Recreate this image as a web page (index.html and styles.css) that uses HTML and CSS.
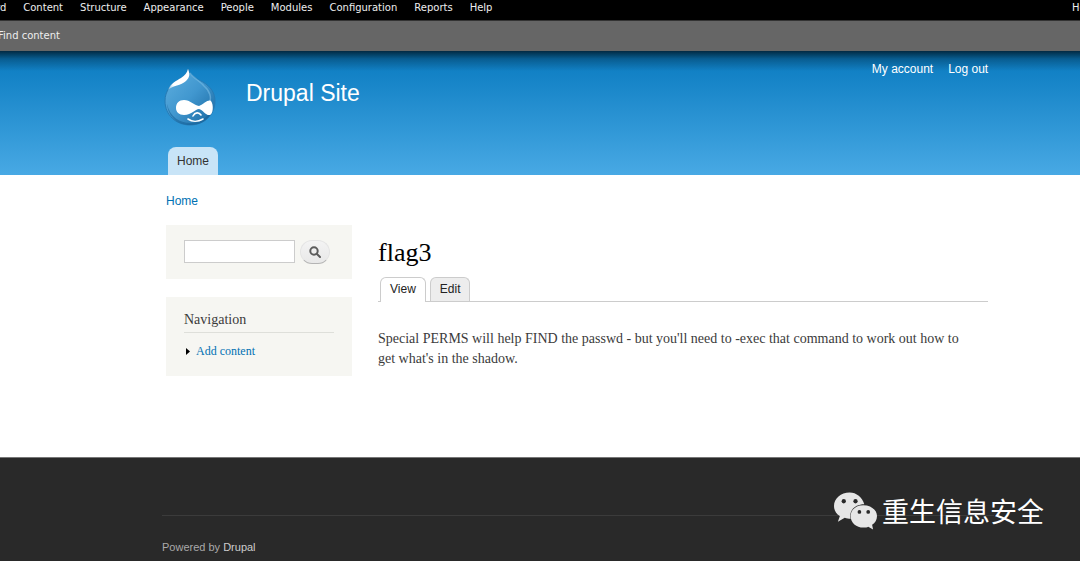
FILE: index.html
```html
<!DOCTYPE html>
<html lang="en">
<head>
<meta charset="utf-8">
<title>flag3 | Drupal Site</title>
<link rel="stylesheet" href="styles.css">
</head>
<body>
<div class="toolbar">
  <div class="toolbar-menu">
    <nav class="toolbar-links" aria-label="Administration">
      <a href="#">Dashboard</a><a href="#">Content</a><a href="#">Structure</a><a href="#">Appearance</a><a href="#">People</a><a href="#">Modules</a><a href="#">Configuration</a><a href="#">Reports</a><a href="#">Help</a>
    </nav>
    <a class="toolbar-user" href="#">Hello</a>
  </div>
  <div class="toolbar-shortcuts"><a href="#">Find content</a></div>
</div>

<header class="header">
  <div class="section header-inner">
    <a class="logo" href="#" aria-label="Drupal Site home">
      <svg width="52" height="58" viewBox="0 0 52 58">
        <defs>
          <linearGradient id="drop" x1="0" y1="0" x2="1" y2="1">
            <stop offset="0" stop-color="#5fb0e0"/><stop offset=".5" stop-color="#4197cf"/><stop offset="1" stop-color="#17669f"/>
          </linearGradient>
          <linearGradient id="shine" x1="1" y1="0" x2="0" y2="1">
            <stop offset="0" stop-color="#fff"/><stop offset=".75" stop-color="#fff"/><stop offset="1" stop-color="#fff" stop-opacity=".2"/>
          </linearGradient>
        </defs>
        <path d="M24 1C26 8 33 11 39 14C47 19 51 25 51 33C51 47 40 57 26 57C12 57 1 47 1 33C1 23 7 16 14 12C19 9 23 6 24 1Z" fill="url(#drop)" stroke="#267bb5" stroke-width="1"/>
        <path d="M26 5C29 10 36 13 40 18C46 23 48 30 45 35" fill="none" stroke="#7abce5" stroke-width="1.5" opacity=".6"/>
        <path d="M24 1C26 6 26 9 22 13C17 18 9 17 4 22C7 15 12 13 17 10C21 7 23 5 24 1Z" fill="url(#shine)"/>
        <path d="M3 36C6 49 16 55 26 55C38 55 46 47 49 39C47 51 38 57 26 57C13 57 4 48 3 36Z" fill="#125b91" opacity=".5"/>
        <path d="M20 32C26 32 30 37 35 38C40 36 44 31 47 33C50 37 49 46 46 47C42 48 39 42 35 41C31 41 28 47 20 47C15 47 12 44 12 40C12 35 15 32 20 32Z" fill="#fff"/>
        <path d="M29 48C31 44 35 44 37 47M24 51C28 54 34 54 39 51" fill="none" stroke="#fff" stroke-width="1.6" stroke-linecap="round"/>
      </svg>
    </a>
    <a class="site-name" href="#">Drupal Site</a>
    <nav class="account" aria-label="Account"><a href="#">My account</a><a href="#">Log out</a></nav>
  </div>
  <nav class="section main-menu" aria-label="Main menu"><a href="#">Home</a></nav>
</header>

<div class="section page">
  <nav class="breadcrumb" aria-label="Breadcrumb"><a href="#">Home</a></nav>
  <div class="columns">
    <aside class="sidebar">
      <form class="block search">
        <input type="text" aria-label="Search">
        <button type="button" aria-label="Search">
          <svg width="12" height="12" viewBox="0 0 12 12" fill="none" stroke="#5c5c5c" stroke-width="2"><circle cx="5" cy="5" r="3.7"/><path d="M7.7 7.7L11 11" stroke-linecap="round"/></svg>
        </button>
      </form>
      <section class="block navigation">
        <h2>Navigation</h2>
        <ul><li><svg width="4" height="7" viewBox="0 0 4 7"><path d="M0 0L4 3.5L0 7Z"/></svg><a href="#">Add content</a></li></ul>
      </section>
    </aside>
    <main class="content">
      <h1>flag3</h1>
      <nav class="tabs" aria-label="Page tabs"><a class="active" href="#">View</a><a href="#">Edit</a></nav>
      <p>Special PERMS will help FIND the passwd - but you'll need to -exec that command to work out how to get what's in the shadow.</p>
    </main>
  </div>
</div>

<footer class="footer">
  <div class="footer-inner">Powered by <a href="#">Drupal</a></div>
  <div class="watermark">
    <svg width="43" height="38" viewBox="0 0 44 38">
      <path fill="#e6e6e6" d="M16 0C7 0 0 6 0 14C0 18 2 22 6 24L4 30L11 26C13 27 15 27 17 27C15 19 21 12 31 12C29 5 23 0 16 0Z"/>
      <path fill="#e6e6e6" d="M30 13C22 13 17 18 17 24C17 31 23 36 30 36C32 36 34 36 35 35L40 38L39 33C42 31 44 28 44 24C44 18 38 13 30 13Z"/>
      <g fill="#292929"><circle cx="10" cy="9" r="2.2"/><circle cx="22" cy="9" r="2.2"/><circle cx="26" cy="20" r="1.9"/><circle cx="35" cy="20" r="1.9"/></g>
    </svg>
    <span lang="zh">重生信息安全</span>
  </div>
</footer>
</body>
</html>
```
FILE: styles.css
```css
* { box-sizing: border-box; }
html { height: 100%; }
body {
  margin: 0;
  min-height: 100%;
  display: flex;
  flex-direction: column;
  overflow-x: hidden;
  background: #fff;
  color: #3b3b3b;
  font-family: Georgia, "Liberation Serif", serif;
  font-size: 14px;
  line-height: 20px;
}
a { color: #0071b3; text-decoration: none; }
h1, h2, p, ul { margin: 0; padding: 0; font-weight: normal; }
svg { display: block; }
.section { padding-left: 166px; padding-right: 8.5%; }

.toolbar { font: 10px/16px "DejaVu Sans", sans-serif; overflow: hidden; }
.toolbar a { color: #eee; white-space: nowrap; }
.toolbar-menu {
  display: flex;
  justify-content: space-between;
  height: 21px;
  background: #000;
  border-bottom: 1px solid #333;
}
.toolbar-links { display: flex; gap: 17px; margin-left: -48px; }
.toolbar-user { flex: none; width: 8px; }
.toolbar-shortcuts { height: 30px; padding-top: 7px; background: #666; }
.toolbar-shortcuts a { margin-left: -2px; }

.header {
  background:
    linear-gradient(rgba(0, 0, 0, .65), rgba(0, 0, 0, .25) 8px, transparent 20px),
    linear-gradient(#0779bf, #48a9e4);
  font-family: "Liberation Sans", Arial, sans-serif;
}
.header-inner { display: flex; padding-top: 17px; height: 96px; }
.logo { margin-left: -2px; }
.site-name { margin: 11px auto 0 30px; color: #fff; font-size: 23px; line-height: 28px; }
.account { display: flex; gap: 15px; font-size: 12px; line-height: 14px; margin-top: -6px; }
.account a { color: #fff; }
.main-menu { display: flex; }
.main-menu a {
  margin-left: 2px;
  padding: 4px 9px;
  border-radius: 8px 8px 0 0;
  background: #c8e4f7;
  color: #333;
  font-size: 12px;
}

.page { flex: 1 0 auto; }
.breadcrumb { padding-top: 16px; font: 12px/20px "Liberation Sans", Arial, sans-serif; }
.columns { display: grid; grid-template-columns: 186px 1fr; gap: 26px; margin-top: 14px; }
.sidebar { display: flex; flex-direction: column; gap: 18px; }
.block { padding: 15px 18px; background: #f6f6f2; }
.search { display: flex; gap: 5px; }
.search input {
  width: 111px;
  height: 23px;
  border: 1px solid #ccc;
  background: #fff;
}
.search button {
  display: grid;
  place-items: center;
  width: 30px;
  height: 24px;
  padding: 0;
  border: 1px solid #e4e4e4;
  border-bottom-color: #b4b4b4;
  border-radius: 12px;
  background: linear-gradient(#f3f3f3, #e8e8e8);
}
.navigation { padding-top: 13px; }
.navigation h2 {
  padding-bottom: 2px;
  border-bottom: 1px solid #dedfda;
  font-size: 14px;
}
.navigation ul { padding-top: 8px; list-style: none; font-size: 12px; }
.navigation li { display: flex; align-items: center; gap: 6px; padding-left: 2px; }
.content h1 { padding-top: 12px; color: #000; font-size: 26px; line-height: 32px; }
.tabs {
  display: flex;
  gap: 4px;
  height: 25px;
  margin-top: 8px;
  padding-left: 2px;
  border-bottom: 1px solid #ccc;
  font: 12px/23px "Liberation Sans", Arial, sans-serif;
}
.tabs a {
  height: 24px;
  padding: 0 9px;
  border: 1px solid #ccc;
  border-bottom: 0;
  border-radius: 6px 6px 0 0;
  background: #ededed;
  color: #222;
}
.tabs .active { height: 25px; background: #fff; }
.content p { padding: 27px 14px 0 0; }

.footer {
  position: relative;
  padding: 57px 8% 4px 162px;
  border-top: 1px solid #777;
  background: #292929;
  color: #aaa;
  font: 11px/20px "Liberation Sans", Arial, sans-serif;
}
.footer-inner { padding-top: 21px; border-top: 1px solid #3b3b3b; }
.footer a { color: #ccc; }
.watermark {
  position: absolute;
  top: 33px;
  right: 36px;
  display: flex;
  align-items: center;
  gap: 5px;
  color: #fff;
  font: 27px/40px "Noto Sans CJK SC", sans-serif;
}
```
